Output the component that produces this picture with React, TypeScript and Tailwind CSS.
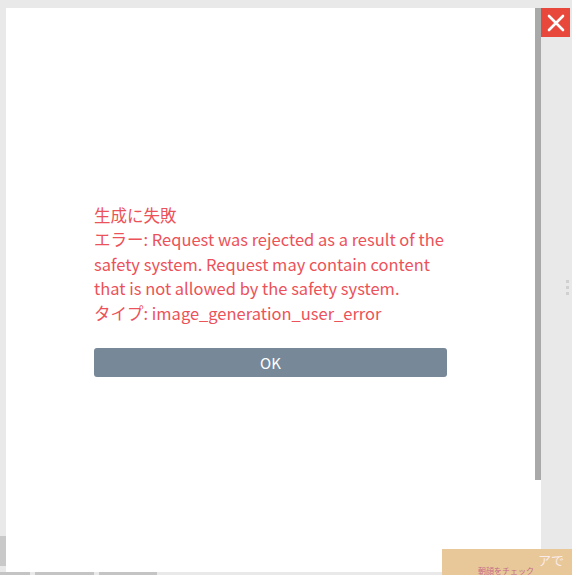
import React from "react";

// Error dialog shown after a failed image generation
export default function App() {
  const font = {
    fontFamily: '"Noto Sans CJK JP", "Noto Sans", sans-serif',
  };

  return (
    <div
      className="relative w-[572px] h-[575px] overflow-hidden bg-[#e9e9e9]"
      style={font}
    >
      {/* bits of the page behind the dialog */}
      <div className="absolute left-0 top-[536px] w-[6px] h-[30px] bg-[#c9c9c9]" />
      <div className="absolute left-0 top-[572px] flex gap-[5px]">
        <div className="w-[30px] h-[3px] bg-[#c4c4c4]" />
        <div className="w-[59px] h-[3px] bg-[#c4c4c4]" />
        <div className="w-[58px] h-[3px] bg-[#c4c4c4]" />
      </div>
      <div className="absolute left-[566px] top-[280px] flex flex-col gap-[3px]">
        <div className="w-[3px] h-[3px] bg-[#d0d0d0]" />
        <div className="w-[3px] h-[3px] bg-[#d0d0d0]" />
        <div className="w-[3px] h-[3px] bg-[#d0d0d0]" />
      </div>

      {/* dialog */}
      <div className="absolute left-[6px] top-[8px] flex bg-white">
        <div className="w-[529px] h-[564px] flex flex-col items-center justify-center">
          <div className="w-[353px]">
            <p className="text-[16.5px] leading-[24.5px] text-[#ec5259]">
              生成に失敗
              <br />
              エラー: Request was rejected as a result of the safety system.
              Request may contain content that is not allowed by the safety
              system.
              <br />
              タイプ: image_generation_user_error
            </p>
            <button className="mt-[23px] w-full h-[29px] rounded-[3px] bg-[#778899] text-white text-[15px] leading-none">
              OK
            </button>
          </div>
        </div>
        {/* scrollbar */}
        <div className="w-[6px] h-[564px]">
          <div className="w-[6px] h-[472px] bg-[#a9a9a9]" />
        </div>
      </div>

      {/* close button */}
      <button className="absolute left-[541px] top-[8px] w-[29px] h-[29px] bg-[#e8473b] flex items-center justify-center">
        <svg width="18" height="18" viewBox="0 0 18 18">
          <path
            d="M2 2L16 16M16 2L2 16"
            stroke="white"
            strokeWidth="2.6"
            strokeLinecap="round"
          />
        </svg>
      </button>

      {/* promo banner peeking in */}
      <div className="absolute left-[442px] top-[549px] w-[130px] h-[26px] bg-[#e8c898] overflow-hidden">
        <div className="absolute left-[96px] top-[4px] text-[13px] leading-none text-[#fbeaea]">
          アで
        </div>
        <div className="absolute left-[36px] top-[18px] text-[8px] leading-none text-[#c46a8a]">
          朝顔をチェック
        </div>
      </div>
    </div>
  );
}
